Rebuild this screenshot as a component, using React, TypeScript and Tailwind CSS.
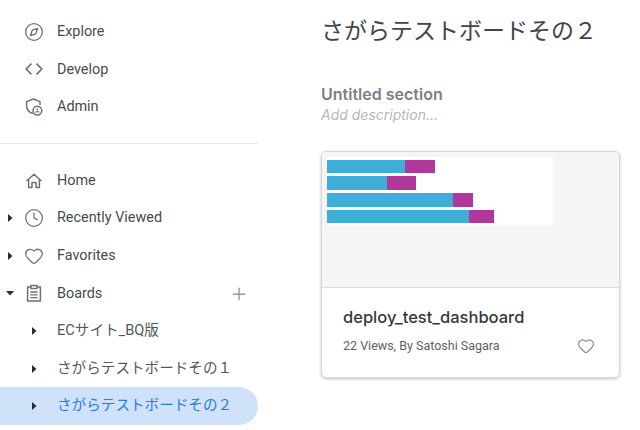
import React from 'react';
import { Compass, Clock, Heart, Plus } from 'lucide-react';

const cjk = '[font-family:Roboto,"Noto_Sans_CJK_JP",sans-serif]';

const Caret = ({ down = false }: { down?: boolean }) => (
  <svg width="10" height="10" viewBox="0 0 10 10" className="shrink-0 text-[#262d33]">
    {down ? <path d="M1 3 L9 3 L5 7.5 Z" fill="currentColor" /> : <path d="M3 1 L7.5 5 L3 9 Z" fill="currentColor" />}
  </svg>
);

const AdminIcon = () => (
  <svg width="20" height="20" viewBox="0 0 20 20" fill="none" stroke="currentColor" strokeWidth="1.5">
    <path d="M9 16.6C5.6 15.6 2.6 12.6 2.6 8.6V4.6L9.5 2L16 4.6V8" strokeLinejoin="round" />
    <circle cx="13.4" cy="13.6" r="4.4" />
    <circle cx="13.4" cy="12.4" r="0.9" fill="currentColor" stroke="none" />
    <path d="M11.6 15.4c.4-1 3.2-1 3.6 0" strokeWidth="1.1" />
  </svg>
);

const HomeIcon = () => (
  <svg width="20" height="20" viewBox="0 0 20 20" fill="none" stroke="currentColor" strokeWidth="1.5">
    <path d="M2.6 10 L10 3.2 L17.4 10 M4.6 8.6 V16.6 H8 V11.6 H12 V16.6 H15.4 V8.6" strokeLinejoin="round" />
  </svg>
);

const BoardIcon = () => (
  <svg width="20" height="20" viewBox="0 0 20 20" fill="none" stroke="currentColor" strokeWidth="1.5">
    <path d="M7 4H3.6V18H16.4V4H13" />
    <path d="M7 2.6H13V5.6H7Z" />
    <path d="M6.4 9H13.6M6.4 11.8H13.6M6.4 14.6H13.6" strokeWidth="1.3" />
  </svg>
);

const DevelopIcon = () => (
  <svg width="20" height="20" viewBox="0 0 20 20" fill="none" stroke="currentColor" strokeWidth="1.6">
    <path d="M7.4 4.6L2.2 10L7.4 15.4M12.6 4.6L17.8 10L12.6 15.4" />
  </svg>
);

const Row = ({ icon, label, caret }: { icon: React.ReactNode; label: string; caret?: React.ReactNode }) => (
  <div className="flex h-[37.6px] items-center">
    <div className="flex w-[24px] justify-center pl-[1px] pr-[5px]">{caret}</div>
    <div className="flex w-[33px] text-[#6a7079]">{icon}</div>
    <span className="flex-1 text-[14.4px] text-[#464b51]">{label}</span>
  </div>
);

const BoardRow = ({ label, active = false }: { label: string; active?: boolean }) => (
  <div className={`flex h-[37.6px] items-center rounded-r-full ${active ? 'bg-[#cfe2fa] text-[#2c7be5]' : 'text-[#53585e]'}`}>
    <div className="flex w-[57px] justify-center pl-[11px]">
      <Caret />
    </div>
    <span className="text-[14.6px]">{label}</span>
  </div>
);

export default function App() {
  return (
    <div className={`flex h-[430px] w-[640px] overflow-hidden bg-white ${cjk}`}>
      <aside className="w-[258px] shrink-0 pt-[13px]">
        <Row icon={<Compass size={20} strokeWidth={1.6} />} label="Explore" />
        <Row icon={<DevelopIcon />} label="Develop" />
        <Row icon={<AdminIcon />} label="Admin" />
        <div className="mt-[17px] mb-[18px] h-px bg-[#e4e6eb]" />
        <Row icon={<HomeIcon />} label="Home" />
        <Row icon={<Clock size={20} strokeWidth={1.5} />} label="Recently Viewed" caret={<Caret />} />
        <Row icon={<Heart size={20} strokeWidth={1.5} />} label="Favorites" caret={<Caret />} />
        <div className="relative">
          <Row icon={<BoardIcon />} label="Boards" caret={<Caret down />} />
          <Plus size={20} strokeWidth={1.5} className="absolute top-[9px] left-[229px] text-[#868b92]" />
        </div>
        <BoardRow label="ECサイト_BQ版" />
        <BoardRow label="さがらテストボードその１" />
        <BoardRow label="さがらテストボードその２" active />
      </aside>
      <main className="flex-1 pl-[63px] pr-[20px] pt-[15px]">
        <h1 className="h-[34px] text-[23px] leading-[34px] text-[#40454a]">さがらテストボードその２</h1>
        <h2 className="mt-[34px] font-['Inter'] text-[16px] leading-[22px] font-semibold text-[#7b8087]">Untitled section</h2>
        <p className="font-['Inter'] text-[14px] leading-[20px] text-[#b4b7bc] italic">Add description...</p>
        <div className="mt-[26px] w-[299px] overflow-hidden rounded-[5px] border border-[#d5d7da] shadow-[0_1px_3px_rgba(0,0,0,0.25)]">
          <div className="h-[136px] border-b border-[#dcdee1] bg-[#f5f5f5] pt-[5px] pl-[5px]">
            <svg width="226" height="69" viewBox="0 0 226 69" className="block bg-white">
              <rect x="0" y="3" width="78" height="13" fill="#3eaed6" />
              <rect x="78" y="3" width="30" height="13" fill="#b0379b" />
              <rect x="0" y="19" width="60" height="14" fill="#3eaed6" />
              <rect x="60" y="19" width="29" height="14" fill="#b0379b" />
              <rect x="0" y="36" width="126" height="14" fill="#3eaed6" />
              <rect x="126" y="36" width="20" height="14" fill="#b0379b" />
              <rect x="0" y="53" width="142" height="13" fill="#3eaed6" />
              <rect x="142" y="53" width="25" height="13" fill="#b0379b" />
            </svg>
          </div>
          <div className="h-[89px] px-[21px] pt-[18px]">
            <div className="font-['Inter'] text-[16.5px] leading-[22px] font-medium text-[#33383d]">deploy_test_dashboard</div>
            <div className="mt-[8px] flex items-center justify-between pr-[3px]">
              <span className="text-[12.5px] leading-[20px] text-[#5c6168]">22 Views, By Satoshi Sagara</span>
              <Heart size={18} strokeWidth={1.5} className="text-[#85898f]" />
            </div>
          </div>
        </div>
      </main>
    </div>
  );
}
